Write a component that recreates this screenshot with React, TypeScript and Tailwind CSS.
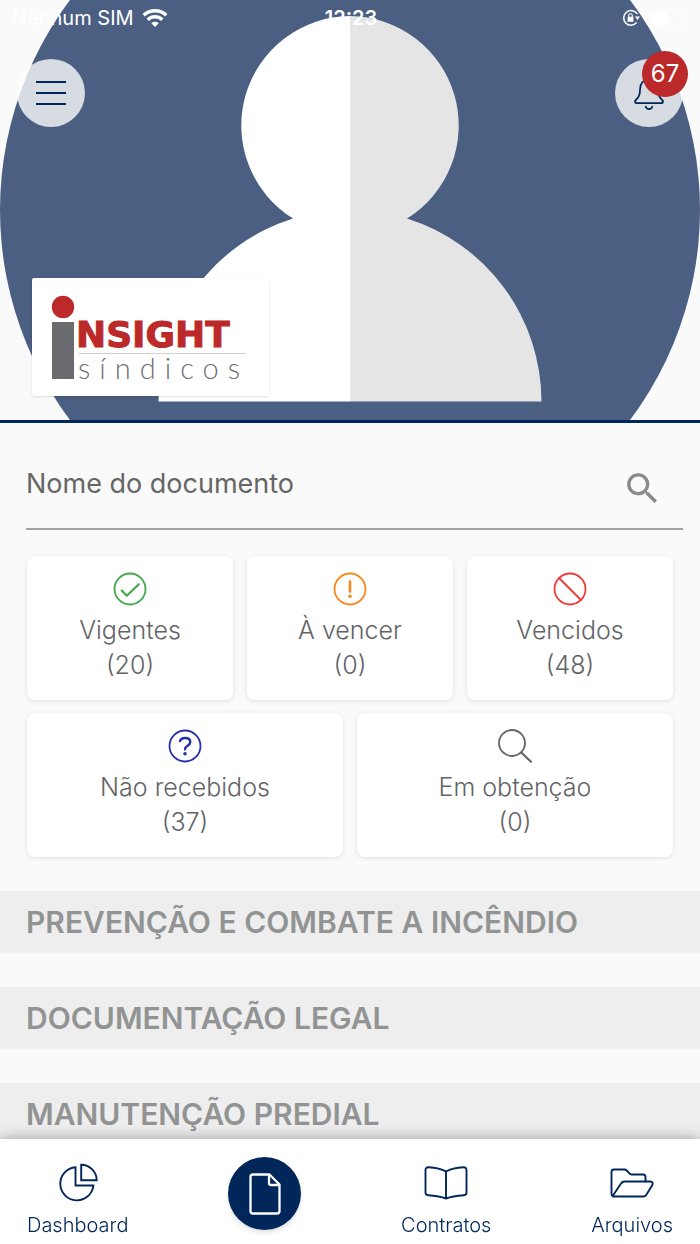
import React from "react";
import { MdSearch } from "react-icons/md";

function WifiIcon() {
  return (
    <svg viewBox="0 0 26 20" className="h-5 w-[26px]" fill="none" stroke="white" strokeWidth="3.4">
      <path d="M1.7 7.2a16.4 16.4 0 0 1 22.6 0" />
      <path d="M5.7 11.7a10.6 10.6 0 0 1 14.6 0" />
      <path d="M13 19l-3.7-3.7a5.4 5.4 0 0 1 7.4 0z" fill="white" stroke="none" />
    </svg>
  );
}

function RotationLockIcon() {
  return (
    <svg viewBox="0 0 18 18" className="h-[18px] w-[18px]" fill="none" stroke="white" strokeWidth="1.5">
      <path d="M15.3 5.2A7.3 7.3 0 1 0 14.6 13.6" />
      <path d="M13 7.5h5l-2.5 3.5z" fill="white" stroke="none" />
      <rect x="5.6" y="7.8" width="5.8" height="5" rx="0.6" fill="white" stroke="none" />
      <path d="M6.7 8V6.6a1.8 1.8 0 0 1 3.6 0V8" strokeWidth="1.1" />
    </svg>
  );
}

function BatteryIcon() {
  return (
    <svg viewBox="0 0 42 19" className="h-[19px] w-[42px]">
      <rect x="0.8" y="0.8" width="36.4" height="17.4" rx="5" fill="none" stroke="white" strokeOpacity="0.5" strokeWidth="1.2" />
      <rect x="3" y="3" width="17" height="13" rx="3" fill="white" />
      <path d="M39 6.5a3.2 3.2 0 0 1 0 6z" fill="white" fillOpacity="0.5" />
    </svg>
  );
}

function Avatar() {
  return (
    <svg viewBox="0 0 700 420" className="block h-auto w-full">
      <circle cx="350" cy="210" r="350" fill="#4b5f82" />
      <path d="M350 16A109.500 109.500 0 0 0 293 218.500A192 192 0 0 0 158.500 401.500H350z" fill="#ffffff" />
      <path d="M350 16A109.500 109.500 0 0 1 407 218.500A192 192 0 0 1 541.500 401.500H350z" fill="#e5e5e5" />
    </svg>
  );
}

function CompanyLogo() {
  return (
    <svg viewBox="0 0 237 118" className="h-[118px] w-[237px]" role="img" aria-label="Insight síndicos">
      <circle cx="31" cy="29" r="11.200" fill="#bb292b" />
      <rect x="20" y="44" width="22" height="57" fill="#6a6b6e" />
      <text
        x="44"
        y="69"
        fontFamily="'DejaVu Sans', sans-serif"
        fontWeight="700"
        fontSize="36"
        fill="#bb292b"
        stroke="#bb292b"
        strokeWidth="1"
      >
        NSIGHT
      </text>
      <path d="M47 75.500h167" stroke="#cfcfcf" />
      <text
        x="46"
        y="101"
        className="tracking-[9px]"
        fontFamily="Lato, sans-serif"
        fontWeight="300"
        fontSize="29"
        fill="#6f7073"
      >
        síndicos
      </text>
    </svg>
  );
}

function BellIcon() {
  return (
    <svg
      viewBox="0 0 32 34"
      className="h-[34px] w-8"
      fill="none"
      stroke="#00265a"
      strokeWidth="1.8"
      strokeLinecap="round"
      strokeLinejoin="round"
    >
      <path d="M16 3.500c-5.500 0-8.700 4-8.900 9.300-.2 6-.9 8.200-4.300 11.200-1.500 1.500-.8 3.200 1 3.200h24.400c1.800 0 2.500-1.700 1-3.200-3.400-3-4.100-5.200-4.300-11.200C24.700 7.500 21.500 3.500 16 3.500z" />
      <path d="M12.700 30.800a3.500 3.500 0 0 0 6.600 0" />
    </svg>
  );
}

const ringProps = {
  viewBox: "0 0 34 34",
  className: "size-[34px]",
  fill: "none",
  strokeWidth: 1.8,
  strokeLinecap: "round" as const,
  strokeLinejoin: "round" as const,
};

const statusCards = [
  {
    label: "Vigentes",
    count: 20,
    span: "col-span-2",
    icon: (
      <svg {...ringProps} stroke="#43a94b">
        <circle cx="17" cy="17" r="15.500" />
        <path d="M8.800 18.500l5 5.200L25.800 12.200" strokeWidth="2.200" />
      </svg>
    ),
  },
  {
    label: "À vencer",
    count: 0,
    span: "col-span-2",
    icon: (
      <svg {...ringProps} stroke="#f9861a">
        <circle cx="17" cy="17" r="15.500" />
        <path d="M17 9.500v10" strokeWidth="2.500" />
        <circle cx="17" cy="24.200" r="1.700" fill="#f9861a" stroke="none" />
      </svg>
    ),
  },
  {
    label: "Vencidos",
    count: 48,
    span: "col-span-2",
    icon: (
      <svg {...ringProps} stroke="#f03a35">
        <circle cx="17" cy="17" r="15.500" />
        <path d="M6 6l22 22" />
      </svg>
    ),
  },
  {
    label: "Não recebidos",
    count: 37,
    span: "col-span-3",
    icon: (
      <svg {...ringProps} stroke="#2430a8">
        <circle cx="17" cy="17" r="15.500" />
        <path d="M12 12c.6-2 2.500-3 5-3 3.200 0 5.300 1.500 5.300 4 0 4-5.300 3.500-5.300 7.300" strokeWidth="2.400" />
        <circle cx="17" cy="24.700" r="1.800" fill="#2430a8" stroke="none" />
      </svg>
    ),
  },
  {
    label: "Em obtenção",
    count: 0,
    span: "col-span-3",
    icon: (
      <svg {...ringProps} stroke="#636466">
        <circle cx="14" cy="14" r="13" />
        <path d="M23.500 23.700l9.500 9" strokeWidth="2.200" />
      </svg>
    ),
  },
];

const sections = ["Prevenção e combate a incêndio", "Documentação legal", "Manutenção predial"];

const navIcon = {
  viewBox: "0 0 44 40",
  className: "h-10 w-11",
  fill: "none",
  stroke: "#00265a",
  strokeWidth: 1.9,
  strokeLinecap: "round" as const,
  strokeLinejoin: "round" as const,
};

function PieIcon() {
  return (
    <svg {...navIcon} strokeLinejoin="miter">
      <path d="M19.500 4.200A16.600 16.600 0 1 0 37.400 22.500H19.500z" />
      <path d="M25.200 1.800a15.500 15.500 0 0 1 15.500 15.500H25.200z" />
    </svg>
  );
}

function BookIcon() {
  return (
    <svg {...navIcon}>
      <path d="M22 8.500C17.500 6 11 4.700 4.500 4.300 2.500 4.200 1.500 5.200 1.500 7v22.500c0 1.700 1 2.600 2.700 2.700 7 .4 13 1.300 17.800 3.300 4.800-2 10.800-2.900 17.800-3.300 1.700-.1 2.700-1 2.700-2.700V7c0-1.800-1-2.800-3-2.700C33 4.700 26.500 6 22 8.500zM22 8.500v27" />
    </svg>
  );
}

function FolderIcon() {
  return (
    <svg {...navIcon}>
      <path d="M3 33.300c-1-.3-1.500-1.300-1.500-2.500V9c0-1.500 1-2.500 2.500-2.500h10.500c1 0 1.500.2 2.200 1l3 3.200c.5.600 1 .8 1.800.8H33c1.500 0 2.500 1 2.500 2.500v4.500" />
      <path d="M3.500 33.500h30c1.300 0 2-.4 2.700-1.500l6-9.800c1-1.700.2-3.700-1.700-3.700h-26c-1.600 0-2.600.5-3.500 2L3 32.500c-.3.500 0 1 .5 1z" />
    </svg>
  );
}

function FileIcon() {
  return (
    <svg viewBox="0 0 32 42" className="h-[42px] w-8" fill="none" stroke="white" strokeWidth="2.300" strokeLinejoin="round">
      <path d="M4 1.500h16.500L30.500 11.500V38c0 1.700-.8 2.500-2.500 2.500H4c-1.700 0-2.500-.8-2.500-2.500V4c0-1.700.8-2.500 2.500-2.500z" />
      <path d="M20 1.500V10c0 1.500.5 2 2 2h8.500" />
    </svg>
  );
}

function NavLink({ label, icon }: { label: string; icon: React.ReactNode }) {
  return (
    <a href="#" className="flex flex-col items-center gap-2.5 pt-3 text-xl leading-6 font-light text-[#00265a]">
      {icon}
      {label}
    </a>
  );
}

export default function App() {
  return (
    <div className="min-h-screen bg-[#fafafa] font-[Inter,sans-serif] text-[#636466]">
      <header className="relative border-b-3 border-[#00265a]">
        <Avatar />

        {/* Status bar and floating buttons */}
        <div className="absolute inset-x-0 top-0">
          <div className="grid h-9 grid-cols-3 items-center pr-2.5 pl-3 text-xl text-white">
            <div className="flex items-center gap-2 whitespace-nowrap">
              Nenhum SIM
              <WifiIcon />
            </div>
            <div className="text-center font-semibold">12:23</div>
            <div className="flex items-center justify-end gap-2">
              <RotationLockIcon />
              <BatteryIcon />
            </div>
          </div>
          <div className="flex justify-between px-[17px] pt-[23px]">
            <button
              aria-label="Menu"
              className="flex size-[68px] flex-col items-center justify-center gap-[9px] rounded-full bg-white/78"
            >
              <span className="h-0.5 w-[30px] bg-[#00265a]" />
              <span className="h-0.5 w-[30px] bg-[#00265a]" />
              <span className="h-0.5 w-[30px] bg-[#00265a]" />
            </button>
            <button
              aria-label="Notificações"
              className="relative flex size-[68px] items-center justify-center rounded-full bg-white/78"
            >
              <BellIcon />
              <span className="absolute -top-2 -right-[5px] flex size-[46px] items-center justify-center rounded-full bg-[#bb292b] text-2xl text-white">
                67
              </span>
            </button>
          </div>
        </div>

        <div className="absolute bottom-6 left-8 rounded-xs bg-white shadow">
          <CompanyLogo />
        </div>
      </header>

      <main className="pb-24">
        {/* Search */}
        <form className="mt-[18px] mr-[17px] ml-[26px] flex h-[89px] items-center border-b-2 border-[#a3a3a3] pr-5">
          <input
            type="text"
            aria-label="Nome do documento"
            placeholder="Nome do documento"
            className="min-w-0 flex-1 bg-transparent text-[27px] outline-none placeholder:text-[#666666]"
          />
          <button type="button" aria-label="Buscar" className="pt-2">
            <MdSearch className="size-[41px] text-[#8a8a8a]" />
          </button>
        </form>

        {/* Status cards */}
        <div className="mx-[27px] mt-[26px] grid grid-cols-6 gap-x-3.5 gap-y-[13px]">
          {statusCards.map((card) => (
            <button
              key={card.label}
              className={`${card.span} flex h-36 flex-col items-center rounded-lg bg-white pt-4 text-[25px] leading-[35px] font-light shadow-[0_1px_5px_rgba(0,0,0,0.1)]`}
            >
              {card.icon}
              <span className="mt-[7px]">{card.label}</span>
              <span>({card.count})</span>
            </button>
          ))}
        </div>

        {/* Document groups */}
        <div className="mt-[34px] flex flex-col gap-[34px]">
          {sections.map((title) => (
            <h2
              key={title}
              className="bg-[#eeeeee] px-[26px] text-[30px] leading-[62px] font-semibold whitespace-nowrap text-[#929494] uppercase"
            >
              {title}
            </h2>
          ))}
        </div>
      </main>

      <nav className="fixed inset-x-0 bottom-0 flex h-[105px] items-center justify-between bg-white px-[27px] pt-1 shadow-[0_0_14px_rgba(0,0,0,0.35)]">
        <NavLink label="Dashboard" icon={<PieIcon />} />
        <a
          href="#"
          aria-label="Documentos"
          className="flex size-[73px] items-center justify-center rounded-full bg-[#00265a] shadow-md"
        >
          <FileIcon />
        </a>
        <NavLink label="Contratos" icon={<BookIcon />} />
        <NavLink label="Arquivos" icon={<FolderIcon />} />
      </nav>
    </div>
  );
}
